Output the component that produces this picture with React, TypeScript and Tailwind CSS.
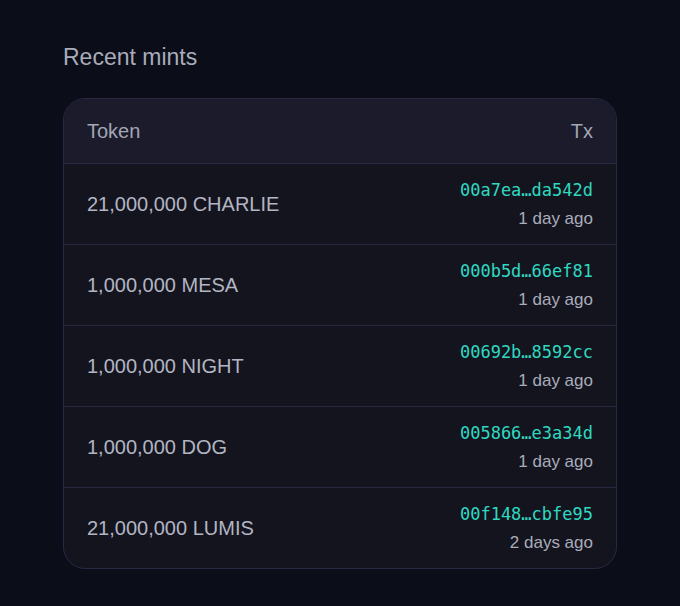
const MINTS = [
  { token: '21,000,000 CHARLIE', tx: '00a7ea…da542d', ago: '1 day ago' },
  { token: '1,000,000 MESA', tx: '000b5d…66ef81', ago: '1 day ago' },
  { token: '1,000,000 NIGHT', tx: '00692b…8592cc', ago: '1 day ago' },
  { token: '1,000,000 DOG', tx: '005866…e3a34d', ago: '1 day ago' },
  { token: '21,000,000 LUMIS', tx: '00f148…cbfe95', ago: '2 days ago' },
];

export default function App() {
  return (
    <div className="min-h-[606px] w-full bg-[#0b0d18] px-[63px] pt-[42px] font-['Liberation_Sans',Arial,sans-serif]">
      <h2 className="text-[23px] leading-[30px] text-[#a9acba]">Recent mints</h2>

      <div className="mt-[26px] w-[554px] overflow-hidden rounded-[22px] border border-[#282843] bg-[#14141f]">
        {/* header */}
        <div className="flex h-[64px] items-center justify-between bg-[#1b1b2b] px-[23px] text-[20px] text-[#a3a6b4]">
          <span>Token</span>
          <span>Tx</span>
        </div>

        {MINTS.map((m) => (
          <div
            key={m.tx}
            className="flex h-[81px] items-center justify-between border-t border-[#282843] px-[23px]"
          >
            <span className="text-[20px] text-[#b2b5c2]">{m.token}</span>
            <div className="flex flex-col items-end">
              <span className="font-['DejaVu_Sans_Mono',monospace] text-[17px] leading-[22px] text-[#2fd9c0]">
                {m.tx}
              </span>
              <span className="mt-[8px] text-[17px] leading-[20px] text-[#a9acba]">{m.ago}</span>
            </div>
          </div>
        ))}
      </div>
    </div>
  );
}
